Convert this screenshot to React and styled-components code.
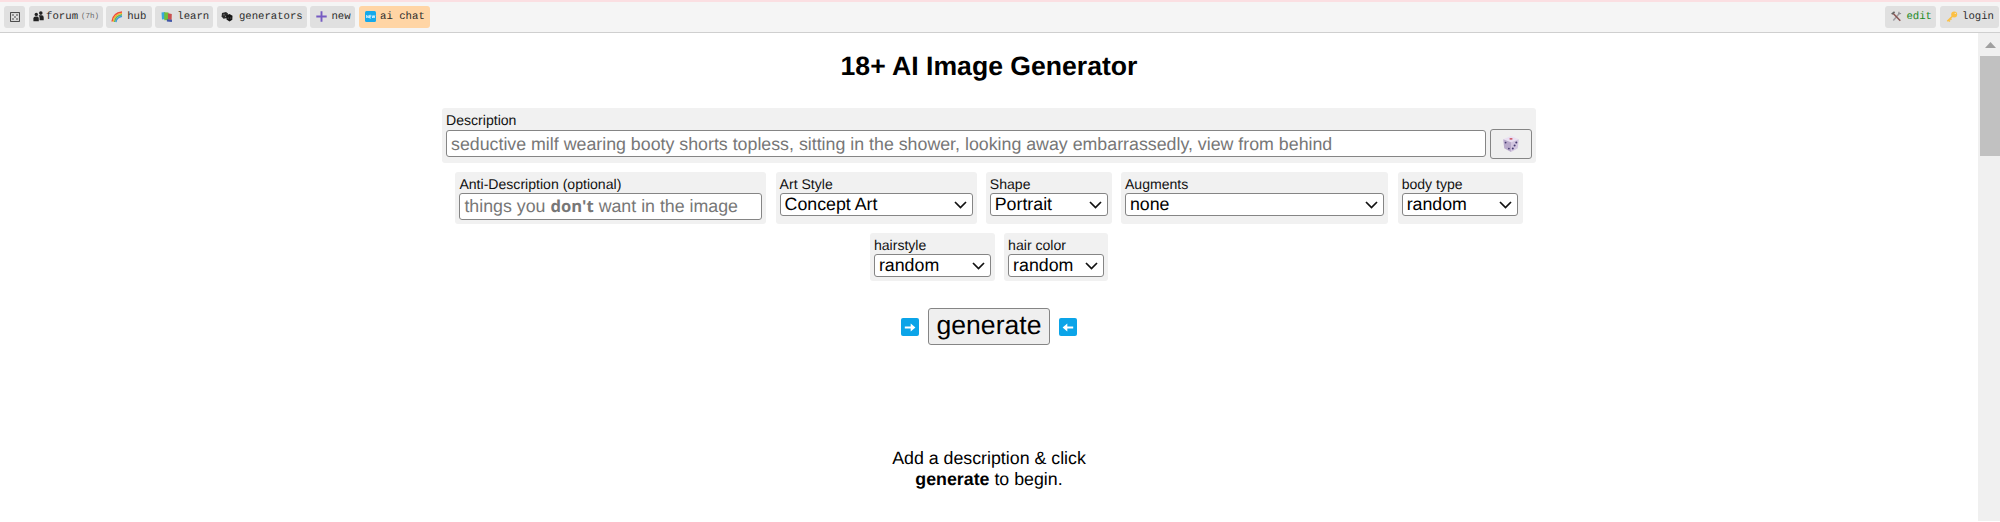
import React from 'react';
import styled, { createGlobalStyle } from 'styled-components';

const GlobalStyle = createGlobalStyle`
  * {
    box-sizing: border-box;
  }
  body {
    margin: 0;
    background: #fff;
    color: #000;
    font-family: "Liberation Sans", Arial, sans-serif;
    font-size: 17.8px;
    text-rendering: geometricPrecision;
    overflow: hidden;
  }
`;

const Page = styled.div`
  display: flex;
  flex-direction: column;
  height: 522px;
`;

const TopBar = styled.div`
  display: flex;
  align-items: flex-start;
  gap: 3.6px;
  height: 33px;
  flex: none;
  padding: 4px 1px 0 4px;
  background: #f5f5f5;
  border-top: 2px solid #fbdfe2;
  border-bottom: 1px solid #cfcfcf;
`;

const NavButton = styled.div`
  display: flex;
  align-items: center;
  gap: ${props => props.gap || 4}px;
  width: ${props => props.width}px;
  height: 21.5px;
  padding-left: ${props => props.pad || 4}px;
  border-radius: 3px;
  background: ${props => props.highlight ? '#ffd5a5' : '#e0e0e0'};
  color: ${props => props.color || '#2c2c2c'};
  font-family: "Liberation Mono", monospace;
  font-size: 10.65px;
  line-height: 20px;
  white-space: nowrap;

  svg {
    flex: none;
  }
`;

const Age = styled.span`
  margin-left: 0.5px;
  font-size: 7.5px;
  color: #666;
`;

const Spacer = styled.div`
  flex: 1;
`;

const Body = styled.div`
  display: flex;
  flex: 1;
  min-height: 0;
`;

const Main = styled.main`
  display: flex;
  flex-direction: column;
  align-items: center;
  flex: 1;
`;

const ScrollTrack = styled.div`
  width: 22px;
  height: 488px;
  padding: 9px 0 0 2px;
  background: #f0f0f0;

  svg {
    display: block;
    margin-left: 5px;
  }
`;

const ScrollThumb = styled.div`
  height: 100px;
  margin-top: 8px;
  background: #c1c1c1;
`;

const Heading = styled.h1`
  margin: 18px 0 26px;
  font-size: 26.6px;
  line-height: 31px;
`;

const Panel = styled.div`
  width: ${props => props.width}px;
  height: ${props => props.height || 52}px;
  padding: 5px 0 0 4px;
  border-radius: 3px;
  background: #f1f1f1;
`;

const Row = styled.div`
  display: flex;
  gap: 9.2px;
  margin-top: 9px;
`;

const Label = styled.div`
  height: 16px;
  font-size: 14.08px;
  line-height: 15px;
  white-space: nowrap;
  color: #111;
`;

const DescriptionRow = styled.div`
  display: flex;
  gap: 4px;
`;

const TextField = styled.div`
  width: ${props => props.width}px;
  height: 27px;
  margin-top: ${props => props.top || 0}px;
  padding-left: 4px;
  border: 1px solid #858585;
  border-radius: 3px;
  background: #fff;
  color: #777;
  line-height: ${props => props.line || 25}px;
  white-space: nowrap;
`;

const Dont = styled.b`
  font-family: "Open Sans", "Noto Sans", sans-serif;
  font-size: 16.6px;
  line-height: 1;
`;

const DiceButton = styled.div`
  display: flex;
  align-items: center;
  justify-content: center;
  width: 42px;
  height: 30px;
  border: 1px solid #858585;
  border-radius: 3px;
  background: #efefef;
`;

const SelectBox = styled.div`
  display: flex;
  align-items: center;
  justify-content: space-between;
  width: ${props => props.width}px;
  height: 23px;
  padding: 0 5px 0 4px;
  border: 1px solid #858585;
  border-radius: 3px;
  background: #fff;
  line-height: 21px;
  white-space: nowrap;
`;

const GenerateRow = styled.div`
  display: flex;
  align-items: center;
  gap: 8.5px;
  margin-top: 27px;
`;

const GenerateButton = styled.div`
  width: 122.5px;
  height: 37px;
  border: 1px solid #858585;
  border-radius: 3px;
  background: #efefef;
  font-size: 26.6px;
  line-height: 33px;
  text-align: center;
`;

const Hint = styled.div`
  margin-top: 103px;
  line-height: 20.5px;
  text-align: center;
`;

const DiceFace = () => (
  <svg width="10" height="10" viewBox="0 0 10 10">
    <rect x="0.6" y="0.6" width="8.8" height="8.8" fill="none" stroke="#333" strokeWidth="0.9" />
    {[[3, 3], [7, 3], [5, 5], [3, 7], [7, 7]].map(([x, y]) => (
      <circle key={`${x}${y}`} cx={x} cy={y} r="0.8" fill="#333" />
    ))}
  </svg>
);

const People = () => (
  <svg width="11" height="11" viewBox="0 0 11 11" fill="#222">
    <circle cx="3.3" cy="3.4" r="1.7" />
    <circle cx="7.8" cy="2.1" r="1.8" />
    <path d="M0.4 10.2V7.4q0-2 2.2-2h1.5q1.7 0 1.7 2v2.8z" />
    <path d="M5.6 4.3h3.1q2 0 2 2.2v2.7H6.6V7q0-1.5-1-2.7z" />
  </svg>
);

const Rainbow = () => (
  <svg width="12" height="12" viewBox="0 0 12 12" fill="none" strokeWidth="1.4">
    <path d="M1 10.5Q2 2 11 1" stroke="#ef4b3d" />
    <path d="M2.3 10.8Q3 3.4 11 2.4" stroke="#f9b02c" />
    <path d="M3.6 11Q4.4 4.8 11 3.8" stroke="#61bb55" />
    <path d="M4.9 11.1Q5.6 6.2 11 5.2" stroke="#4298dd" />
  </svg>
);

const Books = () => (
  <svg width="12" height="12" viewBox="0 0 12 12">
    <path d="M0.5 1.5l3.5-.5.6 7-3.6.6z" fill="#39a9dc" />
    <path d="M3.2 1.3l4.3.2v7.6l-4.2.1z" fill="#6fbf3c" />
    <path d="M7 2.3l3.8.6-.2 6-3.6-.3z" fill="#c9504f" />
    <path d="M5.8 8.2l5.2.6-.1 2.2-5-.6z" fill="#4055a8" />
  </svg>
);

const DicePair = () => (
  <svg width="12" height="11" viewBox="0 0 12 11">
    <path d="M1 2l4-1 2 1.6L6.3 7 2.5 7.8.6 5.5z" fill="#2a2a2a" />
    <path d="M5.5 4.3l3-1.2 3 1.7-.2 4-2.8 1.6-3-2z" fill="#161616" />
    <circle cx="3" cy="3.8" r="0.6" fill="#aaa" />
    <circle cx="4.5" cy="5.3" r="0.5" fill="#aaa" />
    <circle cx="7.2" cy="7" r="0.5" fill="#888" />
    <circle cx="9.8" cy="7" r="0.5" fill="#888" />
  </svg>
);

const Plus = () => (
  <svg width="11" height="11" viewBox="0 0 11 11" stroke="#765bc2" strokeWidth="1.9">
    <path d="M5.5 0.3v10.4M0.3 5.5h10.4" />
  </svg>
);

const ChatBadge = () => (
  <svg width="11" height="11" viewBox="0 0 11 11">
    <rect width="11" height="11" rx="1.5" fill="#16a9ea" />
    <path d="M1.6 7V4.3L3.3 7V4.3M6 4.3H4.5V7H6M4.5 5.6H6M7 4.3l.7 2.7.7-2.4.7 2.4.7-2.7" fill="none" stroke="#e8f8ff" strokeWidth="0.8" />
  </svg>
);

const Tools = () => (
  <svg width="11" height="11" viewBox="0 0 11 11" fill="none">
    <path d="M2.3 9.5L8.7 2" stroke="#9d9da2" strokeWidth="1.5" />
    <path d="M8 0.8l-.2 2 2.3-.3" stroke="#909095" strokeWidth="1.2" />
    <path d="M2 2.3L9.3 9.7" stroke="#8a5654" strokeWidth="1.6" />
    <path d="M0.7 3.2L3.6 0.8" stroke="#666" strokeWidth="1.7" />
  </svg>
);

const Key = () => (
  <svg width="12" height="12" viewBox="0 0 12 12">
    <circle cx="8.2" cy="3.5" r="3" fill="#fcc044" />
    <circle cx="9.3" cy="2.4" r="0.7" fill="#e7e1d3" />
    <path d="M6.7 5L1.3 10.3M2.5 9l1.4 1.5M4.2 7.5l1.2 1.2" stroke="#fcc044" strokeWidth="1.6" />
  </svg>
);

const Die = () => (
  <svg width="18" height="18" viewBox="0 0 18 18">
    <path d="M1.2 4.2L9 1l7.8 3.2L9 7.2z" fill="#e9dff2" />
    <path d="M1.2 4.2L9 7.2V17l-6.8-3.8z" fill="#b9aacb" />
    <path d="M16.8 4.2L9 7.2V17l6.8-3.8z" fill="#d3c6e0" />
    <ellipse cx="9" cy="3.9" rx="1.7" ry="0.8" fill="#cf5264" />
    <g fill="#463b70">
      <circle cx="3.6" cy="7.6" r="0.9" />
      <circle cx="6.9" cy="13.6" r="0.9" />
      <circle cx="14.3" cy="7.5" r="1" />
      <circle cx="12.6" cy="10.5" r="1" />
      <circle cx="10.8" cy="13.6" r="1" />
    </g>
  </svg>
);

const Chevron = () => (
  <svg width="13" height="8" viewBox="0 0 13 8" fill="none" stroke="#111" strokeWidth="1.7">
    <path d="M1 1l5.5 5.6L12 1" />
  </svg>
);

const ArrowBadge = ({ left }) => (
  <svg width="18" height="18" viewBox="0 0 18 18">
    <rect width="18" height="18" rx="2" fill="#0ba4e8" />
    <path
      d={left ? 'M14.2 9.5H7' : 'M3.8 9.5H11'}
      stroke="#fff"
      strokeWidth="2"
    />
    <path d={left ? 'M8.3 5.5v8L3.6 9.5z' : 'M9.7 5.5v8l4.7-4z'} fill="#fff" />
  </svg>
);

const Option = ({ label, value, width, selectWidth, height }) => (
  <Panel width={width} height={height}>
    <Label>{label}</Label>
    <SelectBox width={selectWidth}>
      {value}
      <Chevron />
    </SelectBox>
  </Panel>
);

const App = () => (
  <Page>
    <GlobalStyle />
    <TopBar>
      <NavButton width={21} pad={5.5}><DiceFace /></NavButton>
      <NavButton width={74} gap={2.5}><People />forum<Age>(7h)</Age></NavButton>
      <NavButton width={45.5} pad={5}><Rainbow />hub</NavButton>
      <NavButton width={58} pad={6}><Books />learn</NavButton>
      <NavButton width={90} pad={4} gap={6}><DicePair />generators</NavButton>
      <NavButton width={45} pad={6}><Plus />new</NavButton>
      <NavButton width={70.5} pad={6} highlight><ChatBadge />ai chat</NavButton>
      <Spacer />
      <NavButton width={51} pad={6} color="#208a25"><Tools />edit</NavButton>
      <NavButton width={59} pad={6}><Key />login</NavButton>
    </TopBar>
    <Body>
      <Main>
        <Heading>18+ AI Image Generator</Heading>
        <Panel width={1094} height={55}>
          <Label>Description</Label>
          <DescriptionRow>
            <TextField width={1040} top={1} line={26}>
              seductive milf wearing booty shorts topless, sitting in the shower, looking away embarrassedly, view from behind
            </TextField>
            <DiceButton><Die /></DiceButton>
          </DescriptionRow>
        </Panel>
        <Row>
          <Panel width={311}>
            <Label>Anti-Description (optional)</Label>
            <TextField width={303}>
              things you <Dont>don't</Dont> want in the image
            </TextField>
          </Panel>
          <Option label="Art Style" value="Concept Art" width={201} selectWidth={193} />
          <Option label="Shape" value="Portrait" width={126} selectWidth={118} />
          <Option label="Augments" value="none" width={267.5} selectWidth={259} />
          <Option label="body type" value="random" width={125} selectWidth={116} />
        </Row>
        <Row>
          <Option label="hairstyle" value="random" width={125} selectWidth={117} height={48} />
          <Option label="hair color" value="random" width={104} selectWidth={96} height={48} />
        </Row>
        <GenerateRow>
          <ArrowBadge />
          <GenerateButton>generate</GenerateButton>
          <ArrowBadge left />
        </GenerateRow>
        <Hint>
          Add a description &amp; click<br />
          <b>generate</b> to begin.
        </Hint>
      </Main>
      <ScrollTrack>
        <svg width="11" height="6" viewBox="0 0 11 6"><path d="M0 6L5.5 0 11 6z" fill="#a0a0a0" /></svg>
        <ScrollThumb />
      </ScrollTrack>
    </Body>
  </Page>
);

export default App;
